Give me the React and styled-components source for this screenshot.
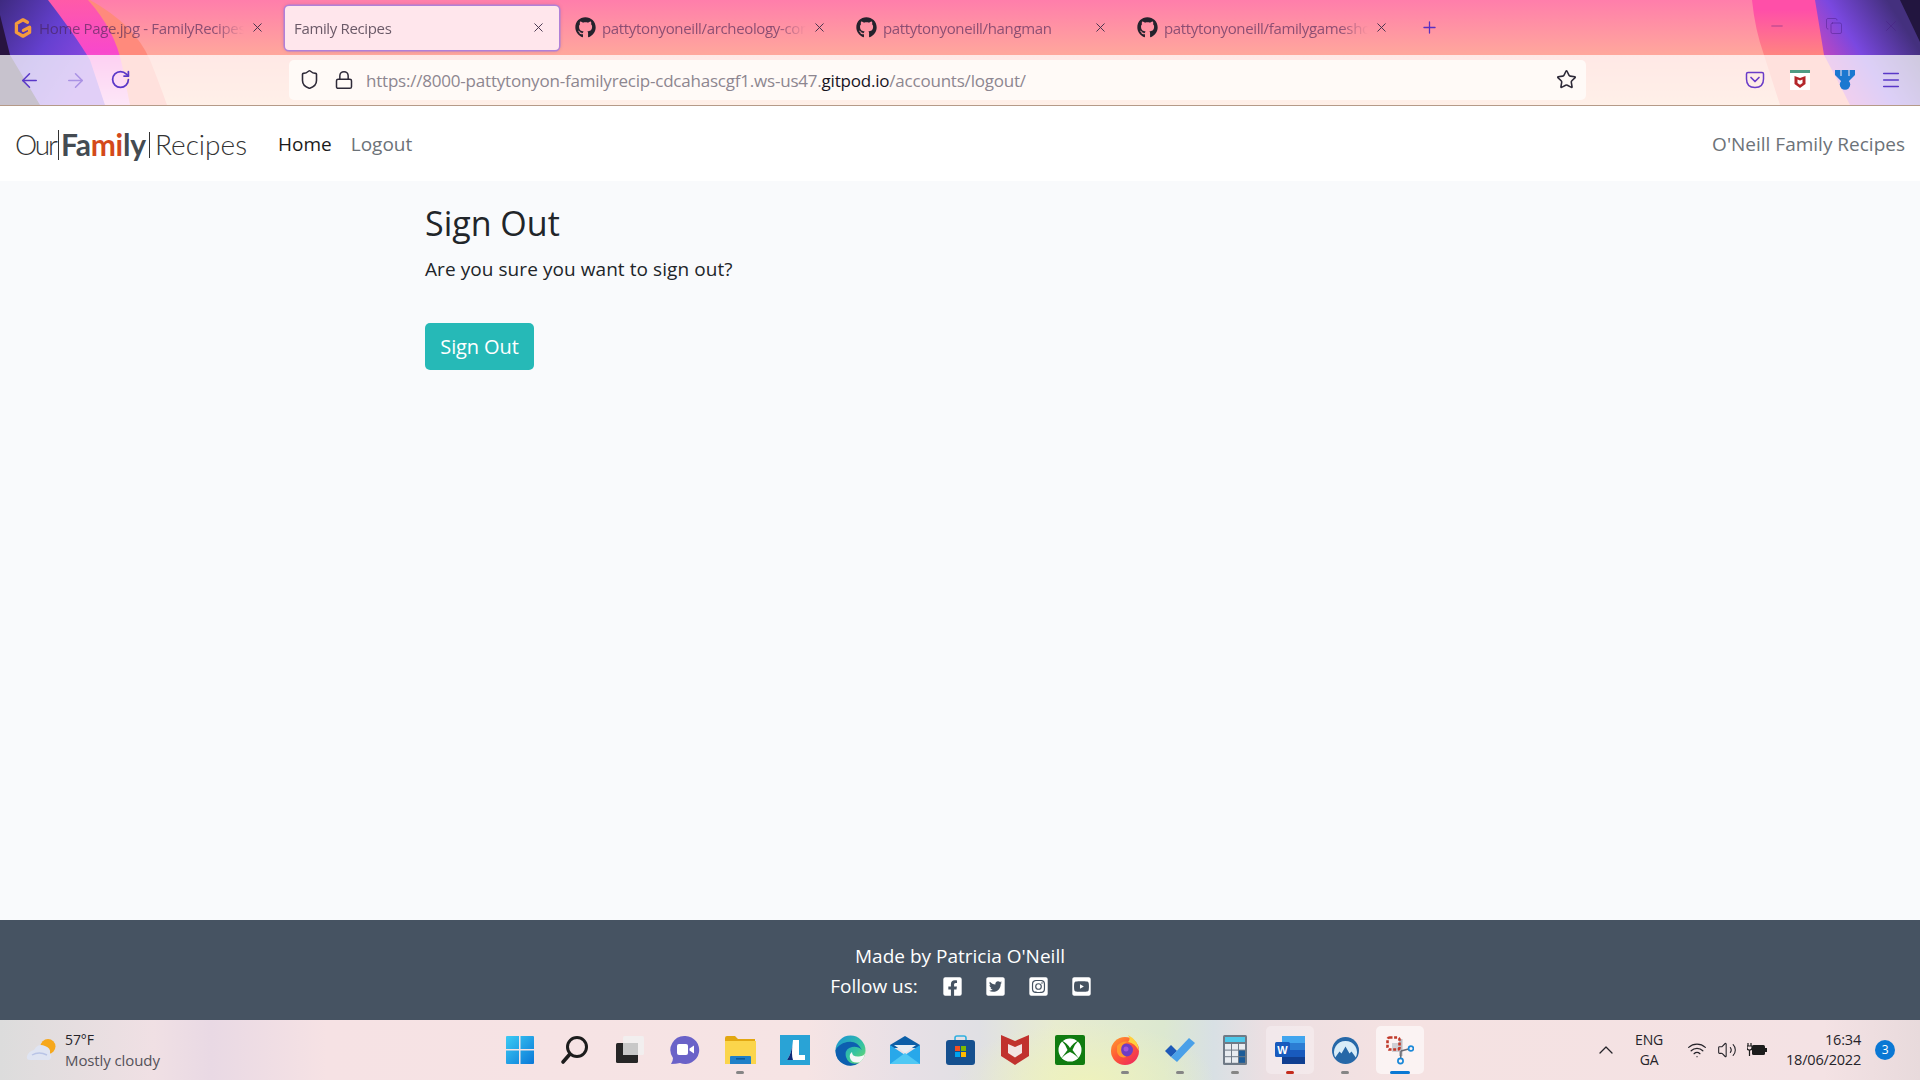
import styled, { createGlobalStyle } from "styled-components";
import { ArrowLeft, ArrowRight, RotateCw, X, Plus, Minus, Menu, Lock, Shield, Star, ChevronUp, Wifi, Volume2, Copy } from "lucide-react";
import { FaGithub, FaFacebookSquare, FaTwitterSquare, FaInstagramSquare, FaYoutubeSquare } from "react-icons/fa";

const GlobalStyle = createGlobalStyle`
    html, body {
        margin: 0;
        padding: 0;
        height: 100%;
        overflow: hidden;
        background: #f9fafc;
    }

    * {
        box-sizing: border-box;
    }
`

const font = `"Open Sans", "Noto Sans", sans-serif`;

const Page = styled.div`
    width: 1920px;
    height: 1080px;
    display: flex;
    flex-direction: column;
    font-family: ${font};
    overflow: hidden;
`

const Chrome = styled.header`
    position: relative;
    height: 106px;
    flex: none;
    background: linear-gradient(180deg, #ff7eab 0%, #ffa79c 52%, #ffc4a8 100%);
    border-bottom: 1px solid #b59a88;
`

const Wallpaper = styled.svg`
    position: absolute;
    inset: 0;
`

const TabStrip = styled.div`
    position: relative;
    height: 55px;
    display: flex;
    align-items: center;
    padding-left: 4px;
    gap: 7px;
`

const Tab = styled.div`
    width: 274px;
    height: 44px;
    flex: none;
    display: flex;
    align-items: center;
    gap: 6px;
    padding: 0 13px 0 9px;
    border-radius: 4px;
    font-size: 15px;
    color: ${(props) => (props.$active ? "#6b5a68" : "rgba(70, 35, 85, 0.62)")};
    background: ${(props) => (props.$active ? "#ffe6ec" : "transparent")};
    box-shadow: ${(props) => (props.$active ? "0 0 0 1.5px #b080d8, 0 0 4px rgba(80,40,120,.4)" : "none")};
`

const TabTitle = styled.span`
    flex: 1;
    min-width: 0;
    white-space: nowrap;
    overflow: hidden;
    letter-spacing: -0.35px;
    mask-image: linear-gradient(90deg, #000 86%, transparent 100%);
`

const TabClose = styled(X)`
    flex: none;
    color: #40304a;
`

const NewTab = styled(Plus)`
    flex: none;
    color: #5a30c0;
    margin-left: 11px;
`

const WindowControls = styled.div`
    position: absolute;
    top: 17px;
    right: 20px;
    display: flex;
    gap: 39px;
    color: rgba(70, 30, 130, 0.6);
`

const Toolbar = styled.div`
    position: relative;
    height: 50px;
    display: flex;
    align-items: center;
    background: rgba(255, 255, 255, 0.74);
`

const NavButtons = styled.div`
    width: 289px;
    flex: none;
    display: flex;
    gap: 23px;
    padding-left: 18px;
    color: #5a38c8;
`

const FadedArrow = styled(ArrowRight)`
    opacity: 0.4;
`

const UrlBar = styled.div`
    width: 1297px;
    height: 40px;
    flex: none;
    display: flex;
    align-items: center;
    padding: 0 9px 0 10px;
    background: #fffaf7;
    border-radius: 5px;
    color: #2e2a38;
    margin-top: -1px;
`

const LockIcon = styled(Lock)`
    margin-left: 14px;
`

const UrlText = styled.span`
    flex: 1;
    margin-left: 12px;
    padding-top: 2px;
    font-size: 17px;
    letter-spacing: -0.21px;
    color: #8d8690;
    white-space: nowrap;
`

const UrlHost = styled.span`
    color: #17141f;
`

const Extensions = styled.div`
    flex: 1;
    display: flex;
    align-items: center;
    gap: 25px;
    padding-left: 159px;
`

const BurgerIcon = styled(Menu)`
    color: #5a38c8;
`

const Navbar = styled.nav`
    height: 75px;
    flex: none;
    display: flex;
    align-items: center;
    padding: 1px 15px 0;
    background: #fff;
    font-size: 19px;
`

const Brand = styled.div`
    display: flex;
    align-items: center;
    font-family: "Lato", ${font};
    font-size: 28px;
    font-weight: 300;
    color: #333;
    margin-right: 31px;
`

const BrandOur = styled.span`
    letter-spacing: -2.1px;
`

const BrandBold = styled.span`
    font-size: 30px;
    font-weight: 700;
    color: #444b52;
    letter-spacing: -0.2px;
`

const BrandAccent = styled.span`
    color: #d4491a;
`

const BrandBar = styled.span`
    width: 1px;
    height: ${(props) => props.$height}px;
    background: #333;
    margin: 2px ${(props) => props.$after}px 0 ${(props) => props.$before}px;
`

const NavLink = styled.a`
    margin-right: 19px;
    color: ${(props) => (props.$active ? "#1a1a1a" : "#6c7278")};
`

const NavRight = styled.span`
    margin-left: auto;
    color: #6c7278;
`

const Main = styled.main`
    flex: 1;
    padding: 17px 0 0 425px;
    background: #f9fafc;
    color: #212529;
`

const Heading = styled.h1`
    margin: 0;
    font-size: 34px;
    font-weight: 400;
    line-height: 50px;
`

const Message = styled.p`
    margin: 6px 0 0;
    font-size: 19px;
    line-height: 30px;
    letter-spacing: 0.07px;
`

const SubmitButton = styled.button`
    display: block;
    width: 109px;
    height: 47px;
    margin-top: 39px;
    padding: 0;
    border: none;
    border-radius: 5px;
    background: #26b9b7;
    color: #fff;
    font-family: ${font};
    font-size: 20px;
    letter-spacing: -0.12px;
`

const Footer = styled.footer`
    height: 100px;
    flex: none;
    padding-top: 21px;
    background: #465362;
    color: #fff;
    font-size: 19px;
    line-height: 30px;
    text-align: center;
`

const FollowRow = styled.div`
    display: flex;
    justify-content: center;
    align-items: center;
    padding-left: 1px;
`

const FollowLabel = styled.span`
    margin-right: 25px;
`

const SocialLink = styled.a`
    display: flex;
    width: 19px;
    margin-right: 24px;
    color: #fff;

    &:last-child {
        margin-right: 0;
    }
`

const Taskbar = styled.div`
    position: relative;
    height: 60px;
    flex: none;
    display: grid;
    grid-template-columns: 1fr auto 1fr;
    align-items: center;
    background:
        radial-gradient(ellipse 130px 60px at 1085px 62px, #eef2bc 0%, rgba(238, 242, 190, 0) 100%),
        linear-gradient(90deg, #dcdcdc 0%, #f0e0e4 8%, #e9d9e4 11%, #f6e2e4 17%, #f6e4e4 42%, #e8e0e6 47%, #e0e0e4 51%, #e8ecd0 55%, #dce8d0 60.6%, #d8e0e4 63.2%, #ecdfe2 66%, #f5e2e2 73%, #f4e2e4 95%, #e8dadc 100%);
`

const Weather = styled.div`
    display: flex;
    align-items: center;
    padding-left: 26px;
`

const WeatherText = styled.div`
    margin-left: 7px;
    font-size: 15px;
    line-height: 20px;
    letter-spacing: -0.1px;
    color: #55525a;
`

const WeatherTemp = styled.div`
    color: #26242a;
    font-size: 14px;
`

const AppList = styled.div`
    display: flex;
    align-items: center;
`

const AppSlot = styled.div`
    position: relative;
    width: 55px;
    height: 60px;
    display: flex;
    align-items: center;
    justify-content: center;

    &::before {
        content: "";
        display: ${(props) => (props.$tile ? "block" : "none")};
        position: absolute;
        top: 6px;
        left: 3px;
        right: 4px;
        bottom: 6px;
        border-radius: 5px;
        background: rgba(255, 255, 255, ${(props) => props.$tile});
    }

    svg {
        position: relative;
    }
`

const RunDot = styled.span`
    position: absolute;
    left: 50%;
    bottom: 6px;
    width: ${(props) => props.$width || 8}px;
    height: 3px;
    margin-left: ${(props) => -(props.$width || 8) / 2}px;
    border-radius: 2px;
    background: ${(props) => props.$color || "#858585"};
`

const Tray = styled.div`
    display: flex;
    align-items: center;
    justify-content: flex-end;
    color: #26242a;
    font-size: 14px;
    line-height: 20px;
    letter-spacing: -0.2px;
`

const Lang = styled.div`
    width: 36px;
    margin: 0 20px 0 13px;
    text-align: center;
`

const TrayIcons = styled.div`
    display: flex;
    align-items: center;
    gap: 10px;
`

const Clock = styled.div`
    width: 92px;
    margin-left: 2px;
    font-size: 14.5px;
    text-align: right;
`

const Badge = styled.span`
    width: 20px;
    height: 20px;
    margin: 0 25px 0 14px;
    border-radius: 50%;
    background: #0a78d4;
    color: #fff;
    font-size: 12px;
    line-height: 20px;
    text-align: center;
`

const tabs = [
    { title: "Home Page.jpg - FamilyRecipes", icon: "gitpod" },
    { title: "Family Recipes", active: true },
    { title: "pattytonyoneill/archeology-conservation", icon: "github" },
    { title: "pattytonyoneill/hangman", icon: "github" },
    { title: "pattytonyoneill/familygameshow", icon: "github" },
];

const GitpodIcon = () => (
    <svg width="20" height="22" viewBox="1 0 20 22" fill="none">
        <path d="M15.5 5.2 L11 2.8 L4.4 6.6 V15.4 L11 19.2 L17.6 15.4 V10.2 L11.4 13.4" stroke="#f49b3d" strokeWidth="3.3" strokeLinecap="round" strokeLinejoin="round" />
    </svg>
)

const PocketIcon = () => (
    <svg width="20" height="18" viewBox="0 0 20 18" fill="none">
        <path d="M3 1.5 H17 Q18.5 1.5 18.5 3 V8 Q18.5 16.5 10 16.5 Q1.5 16.5 1.5 8 V3 Q1.5 1.5 3 1.5 Z" stroke="#6a3cc8" strokeWidth="1.5" />
        <path d="M6 6.5 L10 10.5 L14 6.5" stroke="#6a3cc8" strokeWidth="1.7" strokeLinecap="round" strokeLinejoin="round" />
    </svg>
)

const McafeeTab = () => (
    <svg width="20" height="20" viewBox="0 0 20 20">
        <rect width="20" height="20" fill="#fff" />
        <rect width="20" height="3" fill="#4f9b84" />
        <path d="M4.5 6 L10 8 L15.5 6 V14 L10 18 L4.5 14 Z" fill="#b3262a" />
        <path d="M7.5 9.5 L10 10.5 L12.5 9.5 V13 L10 14.8 L7.5 13 Z" fill="#fff" />
    </svg>
)

const MedalIcon = () => (
    <svg width="20" height="20" viewBox="0 0 20 20">
        <path d="M0 0 H20 V5 L14 11 H6 L0 5 Z" fill="#1a78d0" />
        <path d="M6 0 V6 M14 0 V6" stroke="#fdeaf0" strokeWidth="1" />
        <circle cx="10" cy="14.5" r="5.2" fill="#1a78d0" />
    </svg>
)

const CloudIcon = () => (
    <svg width="32" height="24" viewBox="0 0 32 24">
        <circle cx="22" cy="8.5" r="7.5" fill="#f6a81c" />
        <path d="M4 22 Q0 22 1 18 Q3 13 8 12 Q12 5 19 8 Q25 10 24 15 Q27 20 23 22 Z" fill="#dfe4f2" />
        <path d="M6 17 Q13 13 21 17" stroke="#b9c4e6" strokeWidth="1.4" fill="none" />
    </svg>
)

const WindowsIcon = () => (
    <svg width="30" height="30" viewBox="0 0 30 30">
        <defs>
            <linearGradient id="winBlue" x1="0" y1="0" x2="1" y2="1">
                <stop offset="0" stopColor="#3ccbf4" />
                <stop offset="1" stopColor="#0a78d8" />
            </linearGradient>
        </defs>
        <path d="M1 2 Q1 1 2 1 H14 V14 H1 Z M15.5 1 H28 Q29 1 29 2 V14 H15.5 Z M1 15.5 H14 V29 H2 Q1 29 1 28 Z M15.5 15.5 H29 V28 Q29 29 28 29 H15.5 Z" fill="url(#winBlue)" />
    </svg>
)

const SearchIcon = () => (
    <svg width="30" height="30" viewBox="0 0 30 30" fill="none" stroke="#1c1c1c">
        <circle cx="17" cy="12" r="9.5" strokeWidth="3" />
        <path d="M10 19 L3 27" strokeWidth="3.6" strokeLinecap="round" />
    </svg>
)

const TaskViewIcon = () => (
    <svg width="30" height="30" viewBox="0 0 30 30">
        <rect x="1" y="8" width="22" height="20" rx="1.5" fill="#262626" />
        <rect x="8" y="1" width="21" height="19" rx="1.5" fill="#f2f0f0" fillOpacity="0.9" />
        <rect x="8" y="8" width="15" height="12" fill="#c8c8c8" />
    </svg>
)

const ChatIcon = () => (
    <svg width="30" height="30" viewBox="0 0 30 30">
        <path d="M15.5 1 A14 14 0 1 1 10 28 Q6 29 1 29 Q3 26 3 23 A14 14 0 0 1 15.5 1 Z" fill="#6a62c8" />
        <rect x="7" y="9" width="11" height="11" rx="2" fill="#fff" />
        <path d="M19.5 13.5 L24 10.5 V18.5 L19.5 15.5 Z" fill="#fff" />
    </svg>
)

const FolderIcon = () => (
    <svg width="31" height="28" viewBox="0 0 31 28">
        <path d="M0 2 Q0 0 2 0 H10 L13 3 H30 V10 H0 Z" fill="#e2a711" />
        <path d="M0 5 H31 V28 H0 Z" fill="#fbd54b" />
        <path d="M5 21 Q5 20 6 20 H25 Q26 20 26 21 V28 H5 Z" fill="#1f80c8" />
        <rect x="11" y="22" width="9" height="1.6" fill="#0d5a98" />
    </svg>
)

const LogoLIcon = () => (
    <svg width="30" height="30" viewBox="0 0 30 30">
        <rect width="30" height="30" fill="#29a3d6" />
        <path d="M13 5 H19 V20 H25 V25 H7 Q12 18 13 5 Z" fill="#fff" />
        <path d="M13 5 Q12 18 7 25 H13 Q11 20 13 5 Z" fill="#0e2a78" />
    </svg>
)

const EdgeIcon = () => (
    <svg width="31" height="31" viewBox="0 0 31 31">
        <defs>
            <linearGradient id="edgeTop" x1="0" y1="0" x2="1" y2="1">
                <stop offset="0" stopColor="#1a90d8" />
                <stop offset="0.6" stopColor="#35c4a0" />
                <stop offset="1" stopColor="#7fdc60" />
            </linearGradient>
        </defs>
        <circle cx="15.5" cy="15.5" r="15" fill="url(#edgeTop)" />
        <path d="M0.5 15.5 A15 15 0 0 0 24 28 Q14 31 11 22 Q9 14 17 12 Q23 11 27 15 Q22 5 12 7 Q3 9 .5 15.5 Z" fill="#0d5fb0" />
        <path d="M30 17 Q30 21 24 21.5 Q17 22 17 17 Q14 19 15 23 Q17 29 25 27 Q30 23 30 17 Z" fill="#f4f7f7" />
    </svg>
)

const MailIcon = () => (
    <svg width="30" height="28" viewBox="0 0 30 28">
        <path d="M0 9 L15 0 L30 9 V12 H0 Z" fill="#0c5fa8" />
        <path d="M4 9 H26 L15 17 Z" fill="#e8eef4" />
        <path d="M0 9 L15 19 L30 9 V28 H0 Z" fill="#28a8ea" />
        <path d="M0 28 L15 17 L30 28 Z" fill="#50c8f4" />
    </svg>
)

const StoreIcon = () => (
    <svg width="29" height="30" viewBox="0 0 29 30">
        <path d="M9 6 V3 Q9 1 11 1 H18 Q20 1 20 3 V6" stroke="#30b0e0" strokeWidth="1.6" fill="none" />
        <rect y="5" width="29" height="25" rx="3" fill="#15508f" />
        <rect x="9" y="11" width="5" height="5" fill="#f25022" />
        <rect x="15" y="11" width="5" height="5" fill="#7fba00" />
        <rect x="9" y="17" width="5" height="5" fill="#00a4ef" />
        <rect x="15" y="17" width="5" height="5" fill="#ffb900" />
    </svg>
)

const McafeeIcon = () => (
    <svg width="28" height="30" viewBox="0 0 28 30">
        <path d="M0 0 L14 6 L28 0 V21 L14 30 L0 21 Z" fill="#c1322e" />
        <path d="M7 9 L14 12 L21 9 V18 L14 22.5 L7 18 Z" fill="#f2e4e2" />
    </svg>
)

const XboxIcon = () => (
    <svg width="30" height="30" viewBox="0 0 30 30">
        <rect width="30" height="30" rx="2" fill="#107c10" />
        <circle cx="15" cy="15" r="11.5" fill="#fff" />
        <path d="M6 5 Q12 8 15 13 Q18 8 24 5 Q19 10 17.5 15 L25 25 Q20 19 15 17 Q10 19 5 25 L12.5 15 Q11 10 6 5 Z" fill="#107c10" />
    </svg>
)

const FirefoxIcon = () => (
    <svg width="30" height="30" viewBox="0 0 30 30">
        <defs>
            <linearGradient id="foxBody" x1="0" y1="0" x2="0.8" y2="1">
                <stop offset="0" stopColor="#ffa030" />
                <stop offset="0.5" stopColor="#ff5a34" />
                <stop offset="1" stopColor="#ee2a5c" />
            </linearGradient>
        </defs>
        <circle cx="15" cy="16" r="14" fill="url(#foxBody)" />
        <path d="M18 0 Q28 5 29 16 Q25 8 18 7 Q21 4 18 0 Z" fill="#ffcf3c" />
        <circle cx="16.5" cy="15" r="6.5" fill="#6f3cc4" />
        <circle cx="16" cy="14" r="2.5" fill="#a254d8" />
        <path d="M7 11 Q12 5 19 7 Q13 7.5 11.5 12 Q9.5 19 16.5 22 Q9 24 7 17 Z" fill="#ff9a2e" />
    </svg>
)

const TodoIcon = () => (
    <svg width="30" height="24" viewBox="0 0 30 24">
        <path d="M0 13 L6 7 L12 13 L6 19 Z" fill="#1e5ab8" />
        <path d="M6 19 L24 0 L30 5 L12 24 L6 19 Z" fill="#4aa0e8" />
    </svg>
)

const CalcIcon = () => (
    <svg width="24" height="30" viewBox="0 0 24 30">
        <rect width="24" height="30" rx="1.5" fill="#6f7a86" />
        <rect x="2" y="2" width="20" height="5" fill="#4cc8ea" />
        {[0, 1, 2].map((row) => [0, 1, 2].map((col) => (
            <rect key={`${row}-${col}`} x={2 + col * 7} y={9 + row * 6.6} width="6" height="5.6" fill={col === 2 && row > 0 ? "#1d5c98" : "#e8ecf0"} />
        )))}
    </svg>
)

const WordIcon = () => (
    <svg width="30" height="28" viewBox="0 0 30 28">
        <rect x="7" y="0" width="23" height="28" rx="1.5" fill="#2b7cd3" />
        <rect x="7" y="0" width="23" height="7" fill="#41a5ee" />
        <rect x="7" y="14" width="23" height="7" fill="#185abd" />
        <rect x="7" y="21" width="23" height="7" fill="#103f91" />
        <rect x="0" y="6" width="15" height="15" rx="1.5" fill="#185abd" />
        <text x="7.5" y="17.5" textAnchor="middle" fill="#fff" fontSize="11" fontWeight="700" fontFamily="Liberation Sans">W</text>
    </svg>
)

const NordIcon = () => (
    <svg width="27" height="27" viewBox="0 0 27 27">
        <circle cx="13.5" cy="13.5" r="13.5" fill="#2668a8" />
        <path d="M3.2 20.5 A11.5 11.5 0 1 1 23.8 20.5 L19.5 14.5 L17.5 16.5 L13.5 9.5 L9.5 16.5 L7.5 14.5 Z" fill="#d8ecf8" />
    </svg>
)

const SnipIcon = () => (
    <svg width="28" height="30" viewBox="0 0 28 30" fill="none">
        <rect x="6" y="8" width="10" height="9" fill="#cfcfd4" />
        <rect x="13" y="4" width="3.5" height="17" fill="#bcbcc2" />
        <rect x="1.5" y="2.5" width="12" height="12" rx="2" stroke="#c0392a" strokeWidth="2.6" strokeDasharray="3 1.6" />
        <path d="M15 16 L22.5 14" stroke="#6a6a72" strokeWidth="1.5" />
        <path d="M15 16 L14.7 23" stroke="#6a6a72" strokeWidth="1.5" />
        <circle cx="25" cy="13.5" r="2.4" stroke="#1a88d8" strokeWidth="1.7" />
        <circle cx="14.5" cy="26" r="2.6" stroke="#1a88d8" strokeWidth="1.7" />
    </svg>
)

const BatteryIcon = () => (
    <svg width="20" height="16" viewBox="0 0 20 16">
        <rect x="5" y="3" width="13" height="10" rx="1.5" fill="#1c1c1c" />
        <rect x="18" y="6" width="2" height="4" fill="#1c1c1c" />
        <path d="M1 1 V4 M4 1 V4 M0 4 H5 V6 Q5 8 2.5 8 Q0 8 0 6 Z M2.5 8 V14" stroke="#1c1c1c" strokeWidth="1.2" fill="none" />
    </svg>
)

const apps = [
    { Icon: WindowsIcon },
    { Icon: SearchIcon },
    { Icon: TaskViewIcon },
    { Icon: ChatIcon },
    { Icon: FolderIcon, dot: true },
    { Icon: LogoLIcon },
    { Icon: EdgeIcon },
    { Icon: MailIcon },
    { Icon: StoreIcon },
    { Icon: McafeeIcon },
    { Icon: XboxIcon },
    { Icon: FirefoxIcon, dot: true },
    { Icon: TodoIcon, dot: true },
    { Icon: CalcIcon, dot: true },
    { Icon: WordIcon, dot: true, color: "#c42b1c", tile: 0.3 },
    { Icon: NordIcon, dot: true },
    { Icon: SnipIcon, dot: true, color: "#0a78d4", width: 20, tile: 0.6 },
];

const App = () => {
    return (
        <Page>
            <GlobalStyle />
            <Chrome>
                <Wallpaper width="1920" height="105" viewBox="0 0 1920 105">
                    <defs>
                        <linearGradient id="leftHot" x1="0" y1="0" x2="0" y2="1">
                            <stop offset="0" stopColor="#ff5aa8" />
                            <stop offset="0.5" stopColor="#f848cc" />
                            <stop offset="1" stopColor="#f8a0e0" />
                        </linearGradient>
                        <linearGradient id="leftPurple" gradientUnits="userSpaceOnUse" x1="0" y1="0" x2="95" y2="60">
                            <stop offset="0" stopColor="#3e2a80" />
                            <stop offset="0.55" stopColor="#6540d0" />
                            <stop offset="1" stopColor="#8a48e0" />
                        </linearGradient>
                        <linearGradient id="rightHot" gradientUnits="userSpaceOnUse" x1="1770" y1="10" x2="1770" y2="60">
                            <stop offset="0" stopColor="#ff4fa8" />
                            <stop offset="1" stopColor="#ff8a7c" />
                        </linearGradient>
                        <linearGradient id="rightPurple" gradientUnits="userSpaceOnUse" x1="1822" y1="70" x2="1900" y2="20">
                            <stop offset="0" stopColor="#d046b8" />
                            <stop offset="0.45" stopColor="#7a48e0" />
                            <stop offset="1" stopColor="#44307e" />
                        </linearGradient>
                    </defs>
                    <path d="M0 0 H90 Q135 25 150 60 Q160 85 167 105 H0 Z" fill="#ff8a7c" />
                    <path d="M0 0 H88 Q115 30 122 65 L130 105 H0 Z" fill="url(#leftHot)" />
                    <path d="M0 0 H48 Q75 35 90 60 L105 105 H0 Z" fill="url(#leftPurple)" />
                    <path d="M0 15 L10 55 L40 105 H0 Z" fill="#28143f" />
                    <path d="M1752 0 Q1755 30 1764 55 L1780 105 H1920 V0 Z" fill="url(#rightHot)" />
                    <path d="M1815 0 Q1820 30 1824 55 Q1840 85 1850 105 H1920 V0 Z" fill="url(#rightPurple)" />
                    <path d="M1900 0 Q1912 25 1920 42 V0 Z" fill="#22153f" />
                </Wallpaper>
                <TabStrip>
                    {tabs.map((tab) => (
                        <Tab key={tab.title} $active={tab.active}>
                            {tab.icon === "gitpod" && <GitpodIcon />}
                            {tab.icon === "github" && <FaGithub size={21} color="#24222c" />}
                            <TabTitle>{tab.title}</TabTitle>
                            <TabClose size={15} strokeWidth={1.5} />
                        </Tab>
                    ))}
                    <NewTab size={19} strokeWidth={1.6} />
                </TabStrip>
                <WindowControls>
                    <Minus size={18} strokeWidth={1} />
                    <Copy size={18} strokeWidth={1} />
                    <X size={18} strokeWidth={1} />
                </WindowControls>
                <Toolbar>
                    <NavButtons>
                        <ArrowLeft size={23} strokeWidth={1.6} />
                        <FadedArrow size={23} strokeWidth={1.6} />
                        <RotateCw size={21} strokeWidth={2} />
                    </NavButtons>
                    <UrlBar>
                        <Shield size={21} strokeWidth={1.8} />
                        <LockIcon size={20} strokeWidth={1.8} />
                        <UrlText>
                            https://8000-pattytonyon-familyrecip-cdcahascgf1.ws-us47.<UrlHost>gitpod.io</UrlHost>/accounts/logout/
                        </UrlText>
                        <Star size={21} strokeWidth={1.8} />
                    </UrlBar>
                    <Extensions>
                        <PocketIcon />
                        <McafeeTab />
                        <MedalIcon />
                        <BurgerIcon size={22} strokeWidth={1.6} />
                    </Extensions>
                </Toolbar>
            </Chrome>

            <Navbar>
                <Brand>
                    <BrandOur>Our</BrandOur>
                    <BrandBar $height={30} $before={2} $after={2} />
                    <BrandBold>Fa<BrandAccent>mi</BrandAccent>ly</BrandBold>
                    <BrandBar $height={26} $before={3} $after={5} />
                    Recipes
                </Brand>
                <NavLink $active>Home</NavLink>
                <NavLink>Logout</NavLink>
                <NavRight>O'Neill Family Recipes</NavRight>
            </Navbar>

            <Main>
                <Heading>Sign Out</Heading>
                <Message>Are you sure you want to sign out?</Message>
                <SubmitButton>Sign Out</SubmitButton>
            </Main>

            <Footer>
                <div>Made by Patricia O'Neill</div>
                <FollowRow>
                    <FollowLabel>Follow us:</FollowLabel>
                    <SocialLink><FaFacebookSquare size={21} /></SocialLink>
                    <SocialLink><FaTwitterSquare size={21} /></SocialLink>
                    <SocialLink><FaInstagramSquare size={21} /></SocialLink>
                    <SocialLink><FaYoutubeSquare size={21} /></SocialLink>
                </FollowRow>
            </Footer>

            <Taskbar>
                <Weather>
                    <CloudIcon />
                    <WeatherText>
                        <WeatherTemp>57°F</WeatherTemp>
                        Mostly cloudy
                    </WeatherText>
                </Weather>
                <AppList>
                    {apps.map(({ Icon, dot, color, width, tile }, index) => (
                        <AppSlot key={index} $tile={tile}>
                            <Icon />
                            {dot && <RunDot $color={color} $width={width} />}
                        </AppSlot>
                    ))}
                </AppList>
                <Tray>
                    <ChevronUp size={24} strokeWidth={1.3} />
                    <Lang>ENG<br />GA</Lang>
                    <TrayIcons>
                        <Wifi size={20} strokeWidth={1.5} />
                        <Volume2 size={20} strokeWidth={1.3} />
                        <BatteryIcon />
                    </TrayIcons>
                    <Clock>16:34<br />18/06/2022</Clock>
                    <Badge>3</Badge>
                </Tray>
            </Taskbar>
        </Page>
    )
}

export default App;
